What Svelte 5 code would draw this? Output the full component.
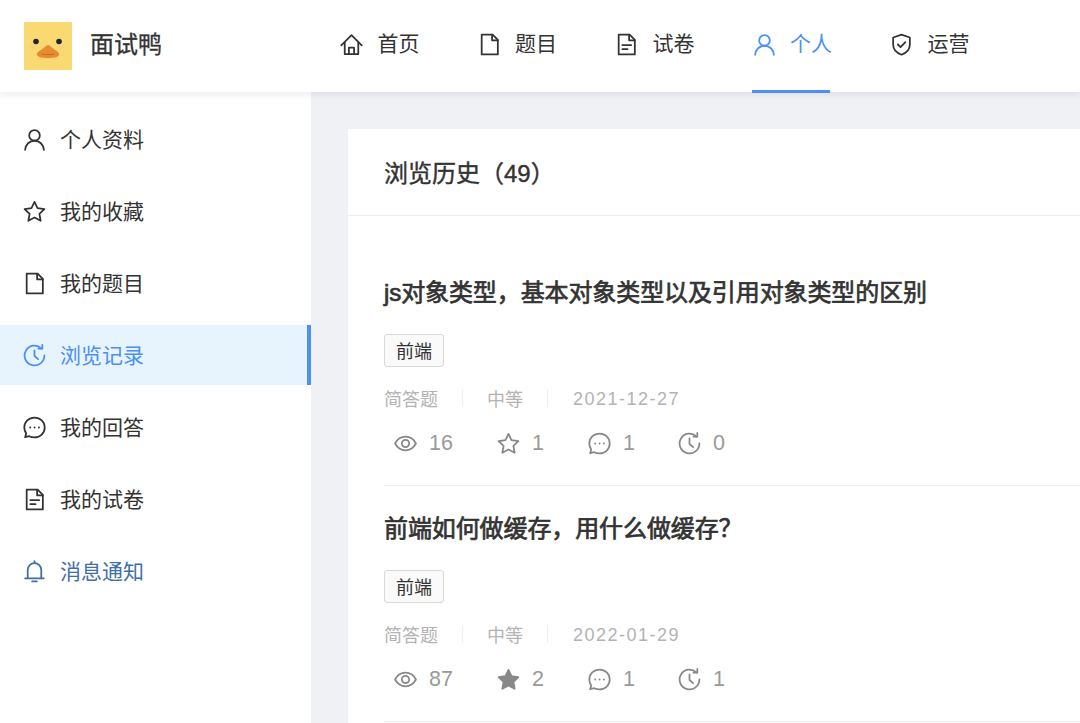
<script>
  const icons = {
    home: ['M2.200 12.800 12 3l9.800 9.800', 'M5.500 10v11.200h13V10', 'M9.500 21v-6h5v6'],
    file: ['M4.500 2.500h10.500l5 5v14h-15.500z', 'M14.500 2.500v5.500h5.500'],
    exam: ['M4.500 2.500h10.500l5 5v14h-15.500z', 'M14.500 2.500v5.500h5.500', 'M8 12.500h8.500', 'M8 16.500h5'],
    user: ['M12 3a5 5 0 1 0 0 10.200a5 5 0 1 0 0-10.200z', 'M3 22c.4-5.300 4.200-8.800 9-8.800s8.600 3.500 9 8.800'],
    shield: ['M12 2.500l8 2.800v7c0 4.800-3.400 7.800-8 9.500-4.600-1.700-8-4.700-8-9.500v-7z', 'M8.500 12l2.600 2.600 4.600-4.800'],
    star: ['M12 2.800l2.900 6 6.600.9-4.800 4.600 1.200 6.600-5.900-3.200-5.900 3.200 1.200-6.600-4.800-4.600 6.600-.9z'],
    clock: ['M21.500 12a9.500 9.500 0 1 1-2.800-6.700', 'M19.500 1.800v3.700h-3.700', 'M12 7v5.500l3.500 3'],
    message: ['M12 2.500c5.500 0 9.800 4.100 9.800 9.500s-4.300 9.500-9.800 9.500c-1.700 0-3.800-.5-5-1.200l-4 1 1-3.600c-1-1.500-1.800-3.500-1.800-5.700 0-5.400 4.300-9.500 9.800-9.500z', 'M7.800 12h.1', 'M12 12h.1', 'M16.200 12h.1'],
    bell: ['M5.500 18.500v-8a6.500 6.500 0 0 1 13 0v8', 'M3 18.500h18', 'M12 2v2', 'M9.800 21.500h4.400'],
    eye: ['M2 12C4.400 7.500 7.700 5.500 12 5.500s7.600 2 10 6.500c-2.400 4.500-5.700 6.500-10 6.500S4.400 16.500 2 12z', 'M12 8.500a3.500 3.500 0 1 0 0 7a3.500 3.500 0 1 0 0-7z']
  };

  const navItems = [
    { icon: 'home', label: '首页' },
    { icon: 'file', label: '题目' },
    { icon: 'exam', label: '试卷' },
    { icon: 'user', label: '个人', active: true },
    { icon: 'shield', label: '运营' }
  ];

  const sideItems = [
    { icon: 'user', label: '个人资料' },
    { icon: 'star', label: '我的收藏' },
    { icon: 'file', label: '我的题目' },
    { icon: 'clock', label: '浏览记录', active: true },
    { icon: 'message', label: '我的回答' },
    { icon: 'exam', label: '我的试卷' },
    { icon: 'bell', label: '消息通知', notice: true }
  ];

  const questions = [
    { title: 'js对象类型，基本对象类型以及引用对象类型的区别', tag: '前端', type: '简答题', level: '中等', date: '2021-12-27', views: 16, stars: 1, starred: false, answers: 1, history: 0 },
    { title: '前端如何做缓存，用什么做缓存？', tag: '前端', type: '简答题', level: '中等', date: '2022-01-29', views: 87, stars: 2, starred: true, answers: 1, history: 1 }
  ];
</script>

{#snippet icon(name, cls, filled = false)}
  <svg class={cls} class:filled viewBox="0 0 24 24" aria-hidden="true">
    {#each icons[name] as d}
      <path {d} />
    {/each}
  </svg>
{/snippet}

<div class="page">
  <header class="topbar">
    <div class="brand">
      <svg class="logo" viewBox="0 0 48 48" aria-hidden="true">
        <rect width="48" height="48" fill="#fad872" />
        <circle cx="12" cy="19.500" r="2.800" fill="#1f2430" />
        <circle cx="35" cy="19.500" r="2.800" fill="#1f2430" />
        <ellipse cx="9" cy="25" rx="3" ry="2" fill="#fbcf7d" />
        <ellipse cx="38" cy="25" rx="3" ry="2" fill="#fbcf7d" />
        <path d="M24 23c2 0 4.500 3.500 8 5.500 3.500 2 4.500 5 .5 6.500-4.500 1.500-12.500 1.500-17 0-4-1.500-3-4.500.5-6.500 3.500-2 6.500-5.500 8-5.500z" fill="#e88a30" />
        <path d="M18 32.500h12" stroke="#b56a26" stroke-width=".8" fill="none" />
      </svg>
      <span class="brand-name">面试鸭</span>
    </div>
    <nav class="nav">
      {#each navItems as item}
        <div class="nav-item" class:active={item.active}>
          {@render icon(item.icon, 'nav-icon')}
          <span class="nav-label">{item.label}</span>
        </div>
      {/each}
    </nav>
  </header>

  <div class="body">
    <aside class="sidebar">
      {#each sideItems as item}
        <div class="side-item" class:active={item.active} class:notice={item.notice}>
          {@render icon(item.icon, 'side-icon')}
          <span class="side-label">{item.label}</span>
        </div>
      {/each}
    </aside>

    <main class="content">
      <section class="card">
        <h2 class="card-title">浏览历史（49）</h2>
        <div class="list">
          {#each questions as q}
            <article class="question">
              <h3 class="q-title">{q.title}</h3>
              <span class="tag">{q.tag}</span>
              <div class="meta">
                <span>{q.type}</span>
                <i class="divider"></i>
                <span>{q.level}</span>
                <i class="divider"></i>
                <span class="date">{q.date}</span>
              </div>
              <div class="stats">
                <div class="stat">{@render icon('eye', 'stat-icon')}<span>{q.views}</span></div>
                <div class="stat">{@render icon('star', 'stat-icon', q.starred)}<span>{q.stars}</span></div>
                <div class="stat">{@render icon('message', 'stat-icon')}<span>{q.answers}</span></div>
                <div class="stat">{@render icon('clock', 'stat-icon')}<span>{q.history}</span></div>
              </div>
            </article>
          {/each}
        </div>
      </section>
    </main>
  </div>
</div>

<style>
  :global(body) {
    margin: 0;
    background: #f0f1f5;
    font-family: "Noto Sans CJK SC", sans-serif;
  }

  .page {
    height: 723px;
    overflow: hidden;
    display: flex;
    flex-direction: column;
    color: #333;
  }

  .topbar {
    flex: none;
    height: 92px;
    display: flex;
    background: #fff;
    box-shadow: 0 2px 8px rgba(40, 50, 90, 0.1);
    position: relative;
    z-index: 1;
  }

  .brand {
    width: 339.500px;
    padding-left: 24px;
    box-sizing: border-box;
    display: flex;
    align-items: center;
    gap: 18px;
  }

  .logo {
    width: 48px;
    height: 48px;
    filter: blur(0.3px);
  }

  .brand-name {
    font-size: 24px;
    margin-top: -8px;
    -webkit-text-stroke: 0.3px currentColor;
  }

  .nav {
    display: flex;
    gap: 59.500px;
  }

  .nav-item {
    width: 78px;
    height: 93px;
    box-sizing: border-box;
    padding: 0 0 2px 1px;
    display: flex;
    align-items: center;
    gap: 15px;
    font-size: 21px;
    white-space: nowrap;
    border-bottom: 3px solid transparent;
  }

  .nav-label {
    margin-top: -4px;
  }

  .nav-item.active {
    color: #4a90f5;
    border-bottom-color: #4a90f5;
  }

  .body {
    flex: 1;
    min-height: 0;
    display: flex;
  }

  .sidebar {
    flex: none;
    width: 311px;
    box-sizing: border-box;
    padding-top: 17px;
    background: #fff;
    display: flex;
    flex-direction: column;
    gap: 12px;
  }

  .side-item {
    height: 60px;
    box-sizing: border-box;
    padding-left: 23px;
    display: flex;
    align-items: center;
    gap: 15px;
    font-size: 21px;
  }

  .side-label {
    margin-top: -2px;
  }

  .side-item.active {
    color: #4a90f5;
    background: #e7f4fe;
    border-right: 4px solid #4a90f5;
  }

  .side-item.notice {
    color: #3f6fa8;
  }

  .content {
    flex: 1;
    min-width: 0;
    padding: 37px 0 0 37px;
  }

  .card {
    background: #fff;
    height: 100%;
  }

  .card-title {
    margin: 0;
    height: 87px;
    box-sizing: border-box;
    padding: 0 0 2px 36px;
    display: flex;
    align-items: center;
    font-family: "Liberation Sans", "Noto Sans CJK SC", sans-serif;
    font-size: 24px;
    font-weight: 400;
    -webkit-text-stroke: 0.4px currentColor;
    border-bottom: 1px solid #eee;
  }

  .list {
    padding: 34px 0 0 36px;
  }

  .question {
    padding: 25px 0 27px;
    border-bottom: 1px solid #eee;
  }

  .q-title {
    margin: 0 0 23px;
    font-family: "Liberation Sans", "Noto Sans CJK SC", sans-serif;
    font-size: 24px;
    line-height: 36px;
    font-weight: 400;
    letter-spacing: -0.1px;
    -webkit-text-stroke: 0.7px currentColor;
    color: #333;
  }

  .tag {
    display: flex;
    align-items: center;
    justify-content: center;
    box-sizing: border-box;
    width: 60px;
    height: 33px;
    padding-bottom: 2px;
    font-size: 18px;
    background: #fafafa;
    border: 1px solid #d9d9d9;
    border-radius: 3px;
  }

  .meta {
    margin-top: 19px;
    height: 24px;
    display: flex;
    align-items: center;
    gap: 24px;
    font-size: 18px;
    color: #b3b3b3;
  }

  .date {
    margin: 2px 0 0 1px;
    font-family: "Liberation Sans", sans-serif;
    letter-spacing: 1.5px;
  }

  .divider {
    width: 1px;
    height: 18px;
    background: #eee;
  }

  .stats {
    margin-top: 18px;
    height: 30px;
    padding-left: 10px;
    display: grid;
    grid-template-columns: 103px 91px 90px auto;
    font-family: "Liberation Sans", sans-serif;
    font-size: 21.5px;
    color: #999;
  }

  .stat {
    display: flex;
    align-items: center;
    gap: 13px;
  }

  :global(svg.nav-icon),
  :global(svg.side-icon),
  :global(svg.stat-icon) {
    flex: none;
    width: 25px;
    height: 25px;
    margin: 0 -1.500px;
    fill: none;
    stroke: currentColor;
    stroke-width: 1.7;
    stroke-linejoin: round;
    stroke-linecap: round;
  }

  :global(svg.stat-icon) {
    color: #888;
  }

  :global(svg.stat-icon.filled) {
    fill: currentColor;
  }
</style>
